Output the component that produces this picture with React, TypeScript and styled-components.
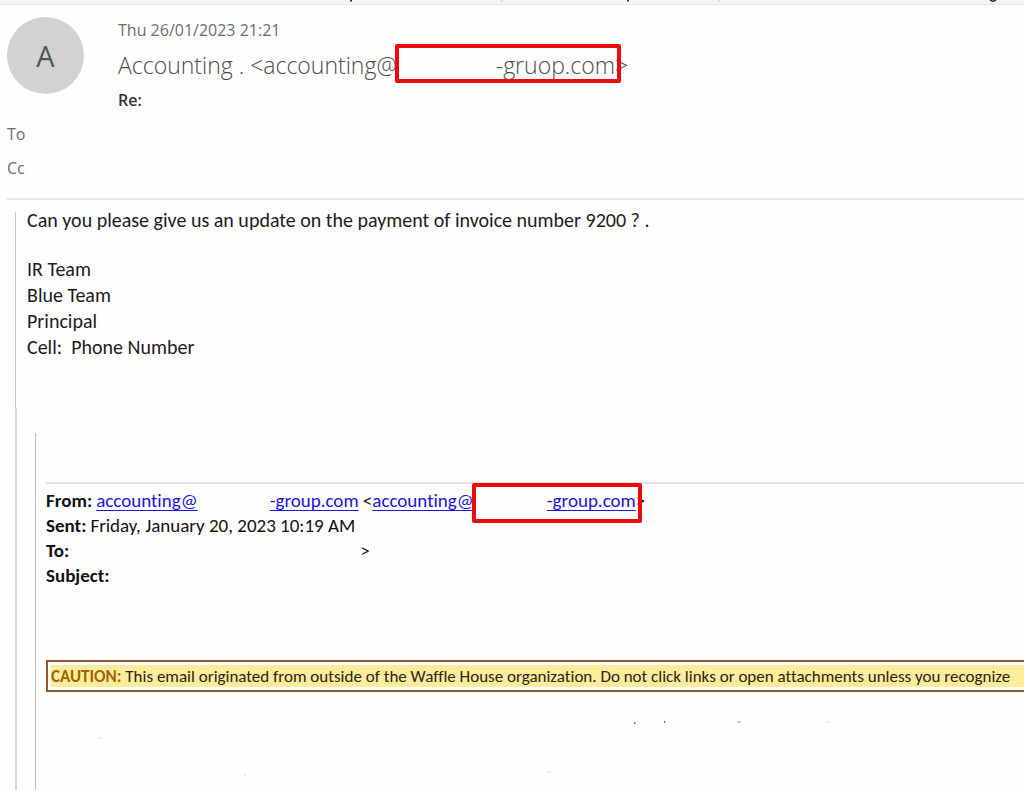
import React from "react";
import styled, { createGlobalStyle } from "styled-components";

const ui = `"Segoe UI", "Open Sans", "Noto Sans", sans-serif`;
const calibri = `Calibri, Carlito, Lato, sans-serif`;

const GlobalStyle = createGlobalStyle`
  * { box-sizing: border-box; }
  body {
    margin: 0;
    background: #fefefe;
    color: #1c1c1c;
    font-family: ${calibri};
    font-variant-ligatures: none;
  }
  p, h1, dl, dd { margin: 0; font-weight: 400; }
`;

const Page = styled.main`
  min-height: 100vh;
  display: flex;
  flex-direction: column;
  overflow: hidden;
`;

const Ribbon = styled.div`
  height: 5px;
  background: #f3f3f3;
  border-bottom: 1px solid #e6e6e6;
  svg { display: block; }
`;

const Header = styled.header`
  margin-left: 7px;
  padding: 12px 0 18px;
  border-bottom: 2px solid #e6e6e6;
  font-family: ${ui};
  font-size: 16px;
  line-height: 24px;
  color: #6c6c6c;
`;

const Sender = styled.div`
  display: flex;
  gap: 34px;
`;

const Avatar = styled.div`
  flex: none;
  width: 77px;
  height: 77px;
  border-radius: 50%;
  background: #d2d2d2;
  color: #555;
  display: grid;
  place-items: center;
  font-size: 29px;
  line-height: 40px;
`;

const SenderLines = styled.div`
  display: flex;
  flex-direction: column;
  padding-top: 1px;
  white-space: nowrap;
`;

const SenderName = styled.h1`
  margin: 3px 0;
  font-size: 23px;
  font-weight: 300;
  line-height: 40px;
  color: #4c4c4c;
`;

const ReplySubject = styled.p`
  font-weight: 600;
  color: #333;
`;

const Recipients = styled.div`
  margin-top: 10px;
  display: grid;
  gap: 10px;
`;

const Gap = styled.span<{ $width: number }>`
  display: inline-block;
  width: ${(p) => p.$width}px;
`;

const Highlight = styled.span<{ $above: number; $below: number }>`
  position: relative;
  display: inline-block;
  line-height: 24px;
  &::after {
    content: "";
    position: absolute;
    inset: ${(p) => -p.$above}px -6px ${(p) => -p.$below}px -2px;
    border: 4px solid #ec0a0c;
    border-radius: 2px;
    pointer-events: none;
  }
`;

const Message = styled.section`
  margin: 12px 0 0 15px;
  padding: 0 0 48px 11px;
  border-left: 1px solid #c8c8c8;
  font-size: 20px;
  line-height: 26px;
`;

const Question = styled.p`
  margin-bottom: 28px;
  line-height: 16px;
`;

const SignatureLine = styled.p`
  white-space: pre;
`;

const Thread = styled.section`
  flex: 1;
  display: flex;
  margin-left: 15px;
  padding: 25px 0 0 18px;
  border-left: 2px solid #dcdcdc;
`;

const Quoted = styled.blockquote`
  flex: 1;
  min-width: 0;
  margin: 0;
  padding: 49px 0 0 10px;
  border-left: 1px solid #bdbdbd;
`;

const Fields = styled.dl`
  padding-top: 4px;
  border-top: 2px solid #e2e2e2;
  font-size: 19px;
  line-height: 25px;
  color: #111;
  white-space: nowrap;
`;

const Field = styled.div`
  display: flex;
  gap: 4px;
  dt { font-weight: 700; }
`;

const MailLink = styled.a`
  color: #1c14dc;
  text-decoration: underline;
  text-underline-offset: 3px;
  text-decoration-thickness: 1px;
`;

const Caution = styled.p`
  margin-top: 72px;
  height: 32px;
  padding: 3px 0 3px 3px;
  border: 2px solid #8c5a34;
  border-right: 0;
  overflow: hidden;
`;

const CautionText = styled.span`
  display: block;
  padding-top: 1px;
  background: #ffeb9c;
  color: #2b2410;
  font-size: 17px;
  line-height: 21px;
  white-space: nowrap;
  strong { color: #9c6500; }
`;

const Residue = styled.svg`
  display: block;
  margin-top: 24px;
`;

export default function App() {
  return (
    <>
      <GlobalStyle />
      <Page>
        <Ribbon aria-hidden="true">
          <svg width="1024" height="4">
            <path d="M351 0v1.5M628 0v1.5" stroke="#333" strokeWidth="2" />
            <path d="M502 0v2M719 0v2" stroke="#ddd" strokeWidth="2" />
            <path d="M990 0q3 2.500 6 0" stroke="#222" strokeWidth="1.500" fill="none" />
          </svg>
        </Ribbon>
        <Header>
          <Sender>
            <Avatar>A</Avatar>
            <SenderLines>
              <time dateTime="2023-01-26T21:21">Thu 26/01/2023 21:21</time>
              <SenderName>
                Accounting . &lt;accounting@
                <Highlight $above={9} $below={6}>
                  <Gap $width={99} />
                  -gruop.com
                </Highlight>
                &gt;
              </SenderName>
              <ReplySubject>Re:</ReplySubject>
            </SenderLines>
          </Sender>
          <Recipients>
            <span>To</span>
            <span>Cc</span>
          </Recipients>
        </Header>
        <Message>
          <Question>
            Can you please give us an update on the payment of invoice number 9200 ? .
          </Question>
          <SignatureLine>IR Team</SignatureLine>
          <SignatureLine>Blue Team</SignatureLine>
          <SignatureLine>Principal</SignatureLine>
          <SignatureLine>{"Cell:  Phone Number"}</SignatureLine>
        </Message>
        <Thread>
          <Quoted>
            <Fields>
              <Field>
                <dt>From:</dt>
                <dd>
                  <MailLink href="#sender">accounting@</MailLink>
                  <Gap $width={72} />
                  <MailLink href="#sender">-group.com</MailLink>
                  {" <"}
                  <MailLink href="#address">accounting@</MailLink>
                  <Highlight $above={6} $below={10}>
                    <Gap $width={73} />
                    <MailLink href="#address">-group.com</MailLink>
                  </Highlight>
                  &gt;
                </dd>
              </Field>
              <Field>
                <dt>Sent:</dt>
                <dd>Friday, January 20, 2023 10:19 AM</dd>
              </Field>
              <Field>
                <dt>To:</dt>
                <dd>
                  <Gap $width={287} />
                  &gt;
                </dd>
              </Field>
              <Field>
                <dt>Subject:</dt>
                <dd />
              </Field>
            </Fields>
            <Caution>
              <CautionText>
                <strong>CAUTION:</strong> This email originated from outside of the Waffle House
                organization. Do not click links or open attachments unless you recognize
              </CautionText>
            </Caution>
            <Residue width="800" height="60" aria-hidden="true">
              <path d="M588 7h1.500M618 6h1.500" stroke="#555" strokeWidth="1.500" />
              <path d="M691 6h4" stroke="#999" />
              <path d="M779 6h5M52 22h3M501 56h4M198 59h2" stroke="#ddd" />
            </Residue>
          </Quoted>
        </Thread>
      </Page>
    </>
  );
}
